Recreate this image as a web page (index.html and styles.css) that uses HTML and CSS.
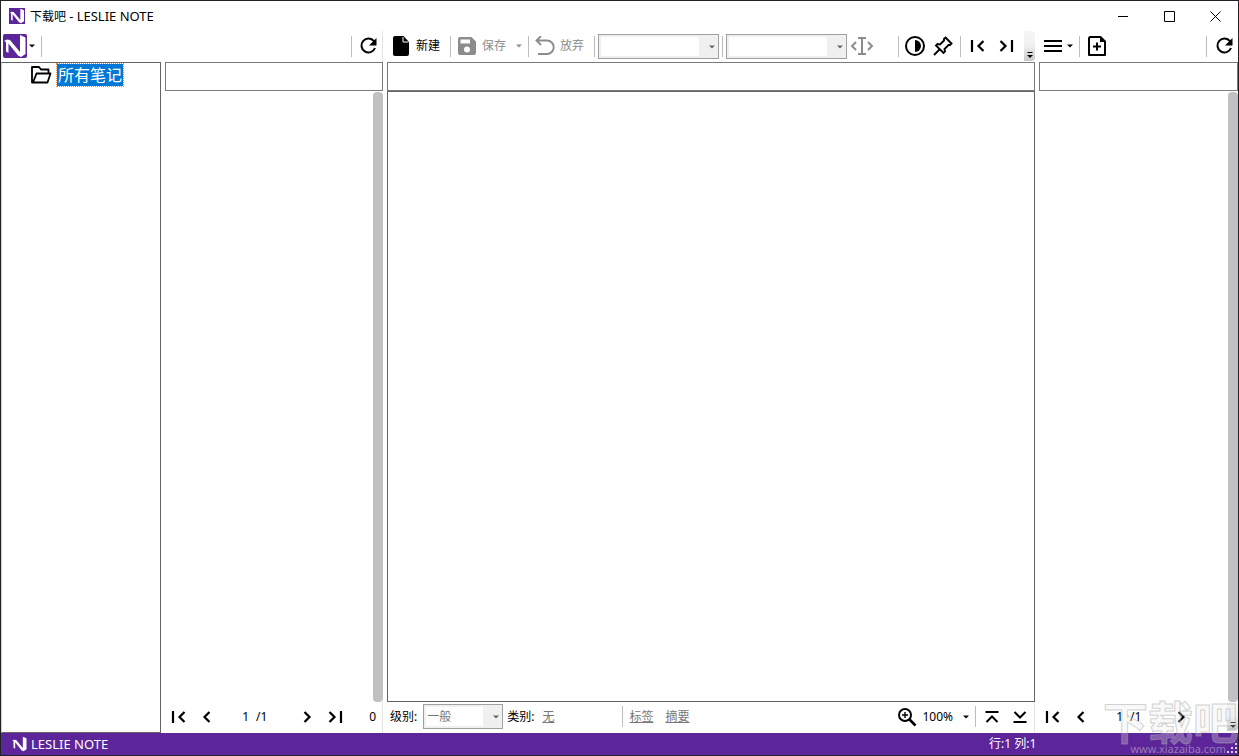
FILE: index.html
```html
<!DOCTYPE html>
<html lang="zh-CN">
<head>
<meta charset="utf-8">
<title>下载吧 - LESLIE NOTE</title>
<link rel="stylesheet" href="styles.css">
</head>
<body>
<svg class="defs" aria-hidden="true">
  <symbol id="logo" viewBox="0 0 24 24"><path d="M1 7L4 5.500L7 6L17 18V1L22.500 3.500V20L18 23L15 21.500L5.500 9.500V19L3 17.500V8Z" fill="#fff"/></symbol>
  <symbol id="caret" viewBox="0 0 6 4"><path d="M0 .5H6L3 3.500Z" fill="currentColor"/></symbol>
  <symbol id="refresh" viewBox="0 0 20 20"><path d="M16 5.200A7 7 0 1 0 17 12" fill="none" stroke="currentColor" stroke-width="2"/><path d="M18.500 2V9.500H11Z" fill="currentColor"/></symbol>
  <symbol id="prev" viewBox="0 0 20 20"><path d="M12.500 5L7.500 10L12.500 15" fill="none" stroke="currentColor" stroke-width="2.200"/></symbol>
  <symbol id="next" viewBox="0 0 20 20"><path d="M7.500 5L12.500 10L7.500 15" fill="none" stroke="currentColor" stroke-width="2.200"/></symbol>
  <symbol id="first" viewBox="0 0 20 20"><path d="M4 4V16M15.500 5L10.500 10L15.500 15" fill="none" stroke="currentColor" stroke-width="2.200"/></symbol>
  <symbol id="last" viewBox="0 0 20 20"><path d="M16 4V16M4.500 5L9.500 10L4.500 15" fill="none" stroke="currentColor" stroke-width="2.200"/></symbol>
  <symbol id="more" viewBox="0 0 8 8"><path d="M1.500 1.500H6.500" stroke="currentColor"/><path d="M1 4H7L4 7Z" fill="currentColor"/></symbol>
</svg>
<div class="window">
  <header class="titlebar">
    <svg class="titlebar__logo"><use href="#logo"/></svg>
    <h1 class="titlebar__text">下载吧 <span class="latin">- LESLIE NOTE</span></h1>
    <button class="winbtn" aria-label="最小化"><svg width="11" height="11"><path d="M0 5.500H10" stroke="#000"/></svg></button>
    <button class="winbtn" aria-label="最大化"><svg width="11" height="11"><path d="M.5 .5H10.500V10.500H.5Z" stroke="#000" fill="none"/></svg></button>
    <button class="winbtn" aria-label="关闭"><svg width="11" height="11"><path d="M.5 .5L10.500 10.500M10.500 .5L.5 10.500" stroke="#000"/></svg></button>
  </header>

  <main class="workspace">
    <section class="left">
      <div class="toolbar toolbar--edge">
        <button class="logo-btn" aria-label="菜单"><svg class="logo-btn__mark"><use href="#logo"/></svg><svg class="caret"><use href="#caret"/></svg></button>
        <span class="sep"></span>
        <span class="sep sep--flush push"></span>
        <button class="icon-btn" aria-label="刷新"><svg class="icon"><use href="#refresh"/></svg></button>
      </div>
      <div class="left__body">
        <nav class="tree">
          <a class="tree__item" href="#all">
            <svg class="tree__icon" viewBox="0 0 22 20"><path d="M3 17.500H2V2H9L11 4.500H18.500V8M3 17.500L6.500 8.500H20.500L17.500 17.500Z" fill="none" stroke="#000" stroke-width="1.800" stroke-linejoin="round"/></svg>
            <span class="tree__label">所有笔记</span>
          </a>
        </nav>
        <section class="pane">
          <input class="field" type="text" aria-label="搜索笔记">
          <div class="list"><div class="scroll"></div></div>
          <div class="pager toolbar--edge">
            <button class="icon-btn" aria-label="第一页"><svg class="icon"><use href="#first"/></svg></button>
            <button class="icon-btn" aria-label="上一页"><svg class="icon"><use href="#prev"/></svg></button>
            <input class="pager__page" type="text" value="1" aria-label="页码">
            <span class="pager__total">/1</span>
            <button class="icon-btn" aria-label="下一页"><svg class="icon"><use href="#next"/></svg></button>
            <button class="icon-btn" aria-label="最后一页"><svg class="icon"><use href="#last"/></svg></button>
            <span class="pager__count">0</span>
          </div>
        </section>
      </div>
    </section>

    <section class="pane center">
      <div class="toolbar toolbar--center">
        <button class="text-btn"><svg class="icon"><path d="M2 2Q2 0 4 0H12.500L18 6V18Q18 20 16 20H4Q2 20 2 18Z" fill="#000"/><path d="M12 1V6H17.500" fill="none" stroke="#fff"/></svg>新建</button>
        <span class="sep"></span>
        <button class="text-btn" disabled><svg class="icon"><path fill-rule="evenodd" d="M3 1H14.500L19 5.500V17Q19 19 17 19H3Q1 19 1 17V3Q1 1 3 1ZM3.500 3.500V7.500H13V3.500ZM10 10.500A3 3 0 1 0 10 16.500A3 3 0 1 0 10 10.500Z" fill="currentColor"/></svg>保存</button>
        <button class="drop-btn" disabled aria-label="保存选项"><svg class="caret"><use href="#caret"/></svg></button>
        <span class="sep sep--after"></span>
        <button class="text-btn" disabled><svg class="icon"><path d="M6 0L1.500 4.500L6 9M2 4.500H12A6.600 6.600 0 0 1 12 18H3" fill="none" stroke="currentColor" stroke-width="1.900"/></svg>放弃</button>
        <span class="sep sep--before"></span>
        <span class="combo"><select class="combo__select" aria-label="字体" disabled><option></option></select><svg class="caret combo__caret"><use href="#caret"/></svg></span>
        <span class="sep sep--tight"></span>
        <span class="combo"><select class="combo__select" aria-label="字号" disabled><option></option></select><svg class="caret combo__caret"><use href="#caret"/></svg></span>
        <button class="icon-btn icon-btn--wide" disabled aria-label="插入"><svg class="icon icon--wide" viewBox="0 0 24 20"><path d="M8 2H16M8 18H16M12 2V18M6 6L2 10L6 14M18 6L22 10L18 14" fill="none" stroke="currentColor" stroke-width="2"/></svg></button>
        <span class="sep gap-before"></span>
        <button class="icon-btn" aria-label="对比度"><svg class="icon"><circle cx="10" cy="10" r="9" fill="none" stroke="#000" stroke-width="2"/><path d="M10 4A6 6 0 0 1 10 16Z" fill="#000"/></svg></button>
        <button class="icon-btn" aria-label="固定"><svg class="icon"><path d="M12.500 1.500L18.500 7.500L17 9L15.500 9L11.500 13L12 15.500L10.500 17L3 9.500L4.500 8L7 8.500L11 4.500L11 3ZM6.500 13.500L1 19" fill="none" stroke="#000" stroke-width="1.900"/></svg></button>
        <span class="sep sep--tight"></span>
        <button class="icon-btn" aria-label="第一条"><svg class="icon"><use href="#first"/></svg></button>
        <button class="icon-btn" aria-label="最后一条"><svg class="icon"><use href="#last"/></svg></button>
        <button class="overflow push" aria-label="更多"><svg class="overflow__icon"><use href="#more"/></svg></button>
      </div>
      <input class="field" type="text" aria-label="标题">
      <textarea class="editor" aria-label="内容"></textarea>
      <div class="pager toolbar--edge props">
        <label for="level">级别:</label>
        <span class="combo combo--small"><select class="combo__select" id="level" disabled><option>一般</option></select><svg class="caret combo__caret"><use href="#caret"/></svg></span>
        <span>类别:</span>
        <a class="link link--category" href="#category">无</a>
        <span class="sep"></span>
        <a class="link" href="#tags">标签</a>
        <a class="link link--next" href="#summary">摘要</a>
        <button class="text-btn push" aria-label="缩放 100%"><svg class="icon"><path d="M12.500 12.500L18.500 18.500" stroke="#000" stroke-width="2.600"/><circle cx="8" cy="8" r="6" fill="none" stroke="#000" stroke-width="2"/><path d="M5 8H11M8 5V11" stroke="#000" stroke-width="1.400"/></svg>100%</button>
        <button class="drop-btn" aria-label="缩放选项"><svg class="caret"><use href="#caret"/></svg></button>
        <span class="sep sep--end"></span>
        <button class="icon-btn" aria-label="顶部"><svg class="icon"><path d="M3.500 5H16.500M4.500 15L10 9.500L15.500 15" fill="none" stroke="#000" stroke-width="2"/></svg></button>
        <button class="icon-btn" aria-label="底部"><svg class="icon"><path d="M3.500 15H16.500M4.500 5L10 10.500L15.500 5" fill="none" stroke="#000" stroke-width="2"/></svg></button>
      </div>
    </section>

    <section class="pane right">
      <div class="toolbar">
        <button class="icon-btn" aria-label="列表"><svg class="icon"><path d="M1 5H19M1 10H19M1 15H19" stroke="#000" stroke-width="2"/></svg></button>
        <button class="drop-btn drop-btn--slim" aria-label="列表选项"><svg class="caret"><use href="#caret"/></svg></button>
        <span class="sep sep--tight"></span>
        <button class="icon-btn" aria-label="添加"><svg class="icon"><path d="M3 1H13.500L18 5.500V19H2V2Z" fill="none" stroke="#000" stroke-width="2" stroke-linejoin="round"/><path d="M13 1V6H18Z" fill="#000"/><path d="M6 10.500H14M10 6.500V14.500" stroke="#000" stroke-width="2"/></svg></button>
        <span class="sep sep--tight push"></span>
        <button class="icon-btn" aria-label="刷新"><svg class="icon"><use href="#refresh"/></svg></button>
      </div>
      <input class="field" type="text" aria-label="搜索附件">
      <div class="list"><div class="scroll"></div></div>
      <div class="pager">
        <button class="icon-btn" aria-label="第一页"><svg class="icon"><use href="#first"/></svg></button>
        <button class="icon-btn" aria-label="上一页"><svg class="icon"><use href="#prev"/></svg></button>
        <input class="pager__page" type="text" value="1" aria-label="页码">
        <span class="pager__total">/1</span>
        <button class="icon-btn" aria-label="下一页"><svg class="icon"><use href="#next"/></svg></button>
        <button class="overflow push" aria-label="更多"><svg class="overflow__icon"><use href="#more"/></svg></button>
      </div>
    </section>
  </main>

  <footer class="status">
    <svg class="status__logo"><use href="#logo"/></svg>
    <span class="latin">LESLIE NOTE</span>
    <span class="status__pos push">行:1 列:1</span>
    <svg class="status__grip" viewBox="0 0 12 12"><path d="M9 0h2v2h-2zM5 4h2v2h-2zM9 4h2v2h-2zM1 8h2v2h-2zM5 8h2v2h-2zM9 8h2v2h-2z" fill="#d8d0e4"/></svg>
  </footer>
  <div class="watermark"><span class="watermark__name">下载吧</span><span class="watermark__url">www.xiazaiba.com</span></div>
</div>
</body>
</html>
```

FILE: styles.css
```css
* { box-sizing: border-box; }

body {
  margin: 0;
  font: 12px/16px "Noto Sans", "Noto Sans CJK SC", sans-serif;
  color: #000;
  background: #fff;
}

button, input, select, textarea { font: inherit; color: inherit; margin: 0; padding: 0; border: 0; background: none; border-radius: 0; }
button { display: flex; align-items: center; justify-content: center; flex: none; white-space: nowrap; }
svg { display: block; flex: none; }
.defs { position: absolute; width: 0; height: 0; }

.window {
  position: relative;
  display: flex;
  flex-direction: column;
  height: 100vh;
  border: 1px solid #222126;
  overflow: hidden;
}

.push { margin-left: auto; }
.latin { font-size: 13px; }
.icon { width: 20px; height: 20px; }
.icon--wide { width: 24px; }
.caret { width: 6px; height: 4px; }

/* Title bar */
.titlebar { display: flex; align-items: center; flex: none; height: 30px; padding-left: 8px; }
.titlebar__logo { width: 16px; height: 16px; background: #5c2599; }
.titlebar__text { flex: 1; margin: 0 0 0 5px; font-size: 12px; font-weight: 400; }
.winbtn { width: 46px; height: 30px; }

/* Workspace */
.workspace { display: flex; flex: 1; min-height: 0; gap: 4px; }
.left { display: flex; flex-direction: column; flex: none; width: 382px; }
.left__body { display: flex; flex: 1; min-height: 0; gap: 4px; }
.pane { display: flex; flex-direction: column; flex: 1; min-width: 0; }
.right { flex: none; width: 199px; }

.toolbar { display: flex; align-items: center; flex: none; height: 31px; padding-bottom: 1px; }
.toolbar--center { padding-left: 4px; }
.toolbar--edge { border-right: 1px solid #e4e4e4; }
.sep { flex: none; width: 1px; height: 21px; margin: 0 6px; background: #bdbdbd; }
.sep--tight { margin: 0 3px; }
.sep--flush { margin: 0 2px; }
.sep--after { margin-left: 0; }
.sep--before { margin-right: 3px; }
.sep--end { margin: 0 2px 0 0; }
.push.sep { margin-left: auto; }
.gap-before { margin: 0 2px 0 21px; }

.icon-btn { width: 28px; height: 28px; }
.icon-btn--wide { width: 30px; }
.text-btn { gap: 5px; height: 28px; padding-right: 4px; }
.drop-btn { width: 18px; height: 28px; }
.drop-btn--slim { justify-content: flex-start; width: 9px; }
button:disabled { color: #8c8c8c; }

.logo-btn { gap: 2px; padding-left: 2px; }
.logo-btn__mark { width: 24px; height: 24px; border-radius: 2px; background: #5c2599; }

.combo { position: relative; flex: none; width: 121px; height: 25px; }
.combo--small { width: 80px; }
.combo__select {
  display: block;
  width: 100%;
  height: 100%;
  padding: 0 18px 0 3px;
  appearance: none;
  border: 1px solid #a0a0a0;
  background: linear-gradient(#fff, #fff) 2px 2px / calc(100% - 21px) calc(100% - 4px) no-repeat #f0f0f0;
  color: #777;
  opacity: 1;
}
.combo__caret { position: absolute; top: 11px; right: 4px; color: #666; }

.overflow { align-items: flex-end; align-self: stretch; width: 11px; padding-bottom: 2px; border-radius: 0 4px 4px 0; background: linear-gradient(#f6f6f6, #f0f0f0 50%, #c8c8c8); }
.overflow__icon { width: 8px; height: 8px; }

.field { flex: none; width: 100%; height: 29px; padding: 0 4px; border: 1px solid #7a7a7a; }
.editor { flex: 1; width: 100%; padding: 4px; border: 1px solid #646464; resize: none; }

.tree { flex: none; width: 160px; border: 1px solid #646464; border-left-color: #cfcfcf; }
.tree__item { display: flex; align-items: center; gap: 4px; padding-left: 28px; color: #000; text-decoration: none; }
.tree__icon { width: 22px; height: 20px; }
.tree__label { padding: 0 1px; border: 1px dotted #ff8728; background: #0078d7 padding-box; color: #fff; font-size: 16px; line-height: 22px; background-color: #0078d7; outline: 1px solid #0078d7; outline-offset: -2px; }

.list { display: flex; flex: 1; justify-content: flex-end; min-height: 0; padding-top: 1px; }
.scroll { width: 10px; border-radius: 4px; background: #c1c1c1; }

.pager { display: flex; align-items: center; flex: none; height: 31px; padding-bottom: 2px; }
.pager__page { width: 28px; text-align: right; }
.pager__total { width: 44px; padding-left: 7px; }
.pager__count { margin-left: auto; padding-right: 6px; }

.props { padding-left: 3px; }
.props .combo { margin: 0 4px 0 6px; }
.link { color: #777; text-decoration: underline; }
.link--category { width: 74px; margin-left: 8px; }
.link--next { margin-left: 12px; }

/* Status bar */
.status { display: flex; align-items: center; flex: none; height: 22px; padding-left: 10px; background: #5c2599; color: #fff; }
.status__logo { width: 17px; height: 16px; margin-right: 3px; }
.status__pos { width: 237px; }
.status__grip { align-self: flex-end; width: 12px; height: 12px; }

.watermark { position: absolute; right: 0; bottom: 0; display: flex; flex-direction: column; align-items: flex-end; white-space: nowrap; pointer-events: none; }
.watermark__name { font: 700 45px/45px "Noto Sans CJK SC", sans-serif; color: rgba(235, 235, 235, .3); -webkit-text-stroke: 1px rgba(165, 165, 165, .5); }
.watermark__url { padding-right: 12px; font-size: 11px; line-height: 12px; color: rgba(190, 180, 205, .6); }
```
